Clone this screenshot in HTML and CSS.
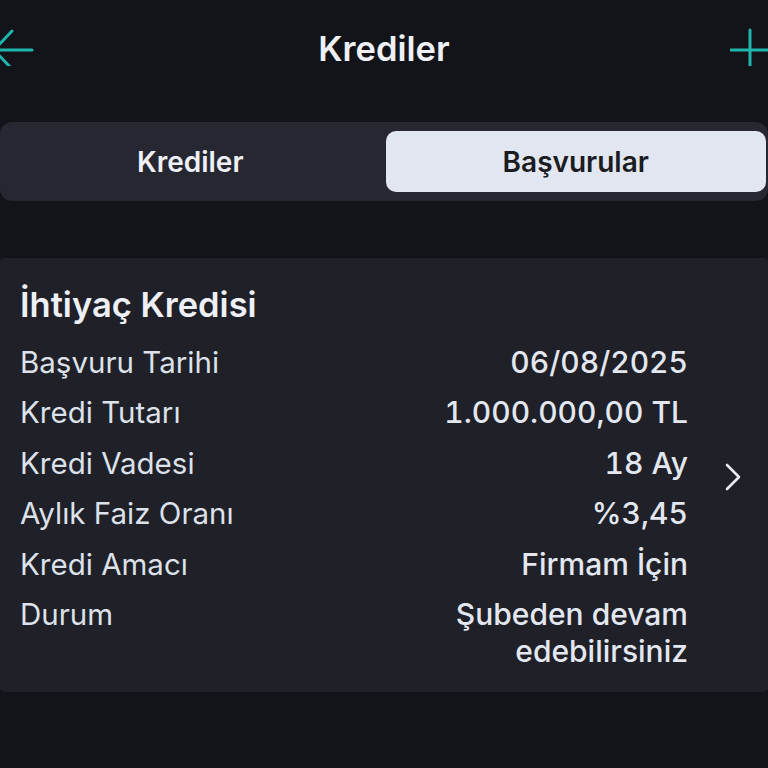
FILE: index.html
```html
<!DOCTYPE html>
<html>

<head>
  <title>Krediler</title>
  <link rel="stylesheet" href="styles.css">
</head>

<body>
  <div class="header">
    <button class="icon-button back">
      <svg width="44" height="44" viewBox="0 0 44 44">
        <path d="M40 28 H4 M20 9 L2 28 L20 47" fill="none" stroke="#1fb5ad" stroke-width="3" stroke-linecap="round" stroke-linejoin="round" />
      </svg>
    </button>
    <h1>Krediler</h1>
    <button class="icon-button add">
      <svg width="44" height="44" viewBox="0 0 44 44">
        <path d="M20 8 V47 M1 28 H40" fill="none" stroke="#1fb5ad" stroke-width="3" stroke-linecap="round" />
      </svg>
    </button>
  </div>

  <div class="tabs">
    <div class="tab">Krediler</div>
    <div class="tab active">Başvurular</div>
  </div>

  <div class="card">
    <div class="card-body">
      <h2>İhtiyaç Kredisi</h2>
      <div class="rows">
        <div class="row">
          <span class="label">Başvuru Tarihi</span>
          <span class="value">06/08/2025</span>
        </div>
        <div class="row">
          <span class="label">Kredi Tutarı</span>
          <span class="value">1.000.000,00 TL</span>
        </div>
        <div class="row">
          <span class="label">Kredi Vadesi</span>
          <span class="value">18 Ay</span>
        </div>
        <div class="row">
          <span class="label">Aylık Faiz Oranı</span>
          <span class="value">%3,45</span>
        </div>
        <div class="row">
          <span class="label">Kredi Amacı</span>
          <span class="value">Firmam İçin</span>
        </div>
        <div class="row">
          <span class="label">Durum</span>
          <span class="value">Şubeden devam<br>edebilirsiniz</span>
        </div>
      </div>
    </div>
    <div class="chevron">
      <svg width="20" height="30" viewBox="0 0 20 30">
        <path d="M4 3 L16 15 L4 27" fill="none" stroke="#e8ebf2" stroke-width="2.6" stroke-linecap="round" stroke-linejoin="round" />
      </svg>
    </div>
  </div>
</body>

</html>
```

FILE: styles.css
```css
body {
  margin: 0;
  font-family: Inter, "Noto Sans", sans-serif;
  background-color: #131419;
  color: #e3e7f0;
  overflow: hidden;
}

.header {
  display: grid;
  grid-template-columns: 60px 1fr 60px;
  align-items: center;
  height: 96px;
}

.header h1 {
  margin: 0;
  text-align: center;
  font-size: 34.5px;
  font-weight: 600;
  color: #eef0f5;
}

.icon-button {
  padding: 0;
  border: none;
  background: none;
  height: 96px;
  display: flex;
  align-items: center;
}

.icon-button svg {
  display: block;
  margin-top: -8px;
}

.back {
  justify-content: flex-start;
}

.back svg {
  margin-left: -8px;
}

.add {
  justify-content: flex-end;
}

.add svg {
  margin-right: -6px;
}

.tabs {
  display: grid;
  grid-template-columns: 1fr 1fr;
  gap: 5px;
  margin-top: 26px;
  padding: 9px 2px 9px 0;
  background-color: #262731;
  border-radius: 12px;
}

.tab {
  height: 61px;
  display: flex;
  align-items: center;
  justify-content: center;
  font-size: 28px;
  font-weight: 600;
  color: #eef0f5;
  border-radius: 10px;
}

.tab.active {
  background-color: #e1e6f0;
  color: #1b1c22;
}

.card {
  display: flex;
  margin-top: 57px;
  padding: 27px 0 22px 20px;
  background-color: #1f2028;
  border-radius: 4px;
}

.card-body {
  flex: 1;
}

.card h2 {
  margin: 0 0 19px;
  font-size: 34.5px;
  line-height: 40px;
  font-weight: 600;
  color: #eef0f5;
}

.rows {
  display: flex;
  flex-direction: column;
  gap: 13.4px;
}

.row {
  display: flex;
  justify-content: space-between;
  align-items: flex-start;
  line-height: 37px;
}

.label {
  font-size: 29.5px;
  font-weight: 400;
  color: #dde1ea;
}

.value {
  text-align: right;
  font-size: 30px;
  font-weight: 500;
  font-variant-numeric: tabular-nums;
  color: #e3e7f0;
}

.chevron {
  box-sizing: border-box;
  width: 80px;
  padding-left: 9px;
  display: flex;
  align-items: center;
  justify-content: center;
}
```
